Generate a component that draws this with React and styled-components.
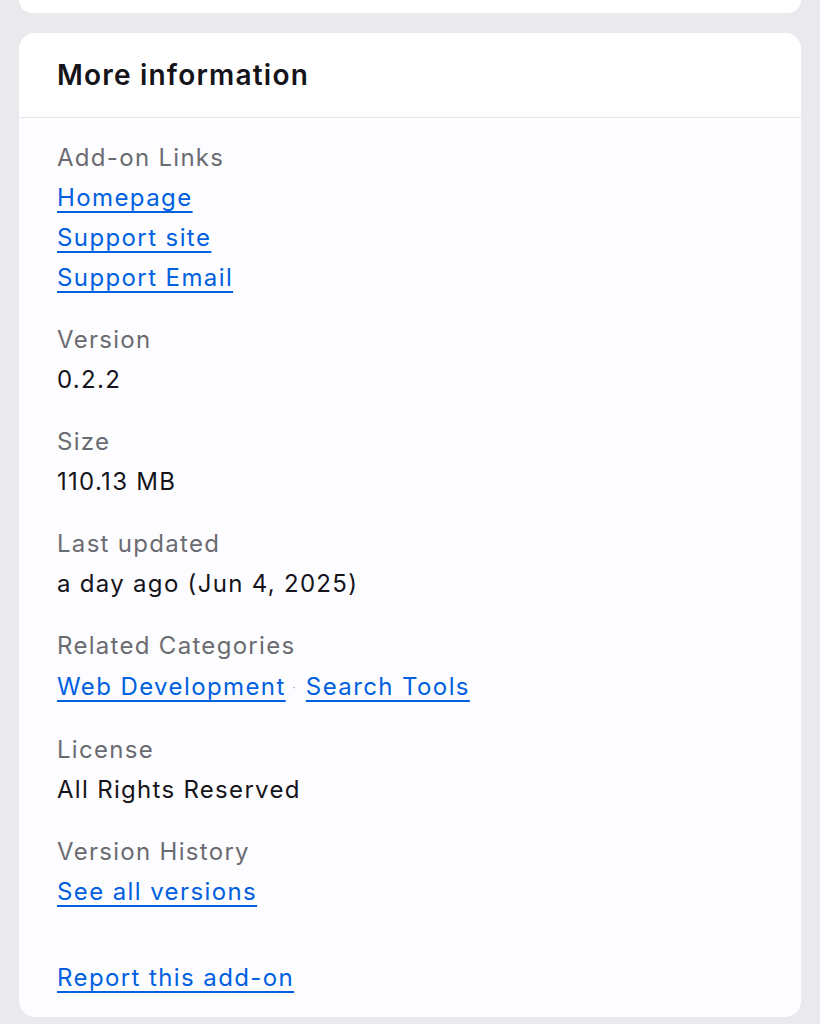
import React from 'react';
import styled, { createGlobalStyle } from 'styled-components';

const Global = createGlobalStyle`
  body {
    margin: 0;
    background: #e9e9ee;
    font-family: Inter, "Noto Sans", sans-serif;
    color: #15141a;
  }
`;

const Page = styled.div`
  padding: 0 19px;
  display: flex;
  flex-direction: column;
  gap: 20px;
`;

const TopCard = styled.div`
  height: 13px;
  background: #fff;
  border-radius: 0 0 16px 16px;
`;

const Card = styled.section`
  background: #fdfdff;
  border-radius: 16px;
  overflow: hidden;
`;

const Header = styled.header`
  height: 84px;
  display: flex;
  align-items: center;
  padding: 0 38px;
  background: #fff;
  border-bottom: 1px solid #e5e5ea;
`;

const Title = styled.h2`
  margin: 0;
  font-size: 28px;
  font-weight: 600;
  letter-spacing: 1.2px;
  color: #15141a;
`;

const Body = styled.div`
  padding: 20px 38px 19px;
`;

const List = styled.dl`
  margin: 0;
  display: flex;
  flex-direction: column;
  gap: 22px;
`;

const Group = styled.div`
  display: flex;
  flex-direction: column;
`;

const Label = styled.dt`
  font-size: 24px;
  line-height: 40px;
  letter-spacing: 1.3px;
  color: #6b6b72;
`;

const Value = styled.dd`
  margin: 0;
  display: flex;
  align-items: center;
  height: ${(p) => (p.$links ? '42px' : '40px')};
  font-size: 24px;
  line-height: 40px;
  letter-spacing: 1.3px;
  color: #15141a;
`;

const Link = styled.a`
  font-size: 24px;
  line-height: 40px;
  letter-spacing: 1.4px;
  color: #0060df;
  text-decoration: underline;
  text-decoration-thickness: 1.5px;
  text-underline-offset: 5px;
  width: fit-content;
`;

const Dot = styled.span`
  color: #8f8f9d;
  font-size: 10px;
  margin: 0 9px 0 7px;
`;

const Report = styled(Link)`
  display: block;
  margin-top: 46px;
`;

const info = [
  { label: 'Version', value: '0.2.2' },
  { label: 'Size', value: '110.13 MB' },
  { label: 'Last updated', value: 'a day ago (Jun 4, 2025)' },
];

export default function App() {
  return (
    <>
      <Global />
      <Page>
        <TopCard />
        <Card>
          <Header>
            <Title>More information</Title>
          </Header>
          <Body>
            <List>
              <Group>
                <Label>Add-on Links</Label>
                <Link href="#">Homepage</Link>
                <Link href="#">Support site</Link>
                <Link href="#">Support Email</Link>
              </Group>
              {info.map((item) => (
                <Group key={item.label}>
                  <Label>{item.label}</Label>
                  <Value>{item.value}</Value>
                </Group>
              ))}
              <Group>
                <Label>Related Categories</Label>
                <Value $links>
                  <Link href="#">Web Development</Link>
                  <Dot>·</Dot>
                  <Link href="#">Search Tools</Link>
                </Value>
              </Group>
              <Group>
                <Label>License</Label>
                <Value>All Rights Reserved</Value>
              </Group>
              <Group>
                <Label>Version History</Label>
                <Link href="#">See all versions</Link>
              </Group>
            </List>
            <Report href="#">Report this add-on</Report>
          </Body>
        </Card>
      </Page>
    </>
  );
}
